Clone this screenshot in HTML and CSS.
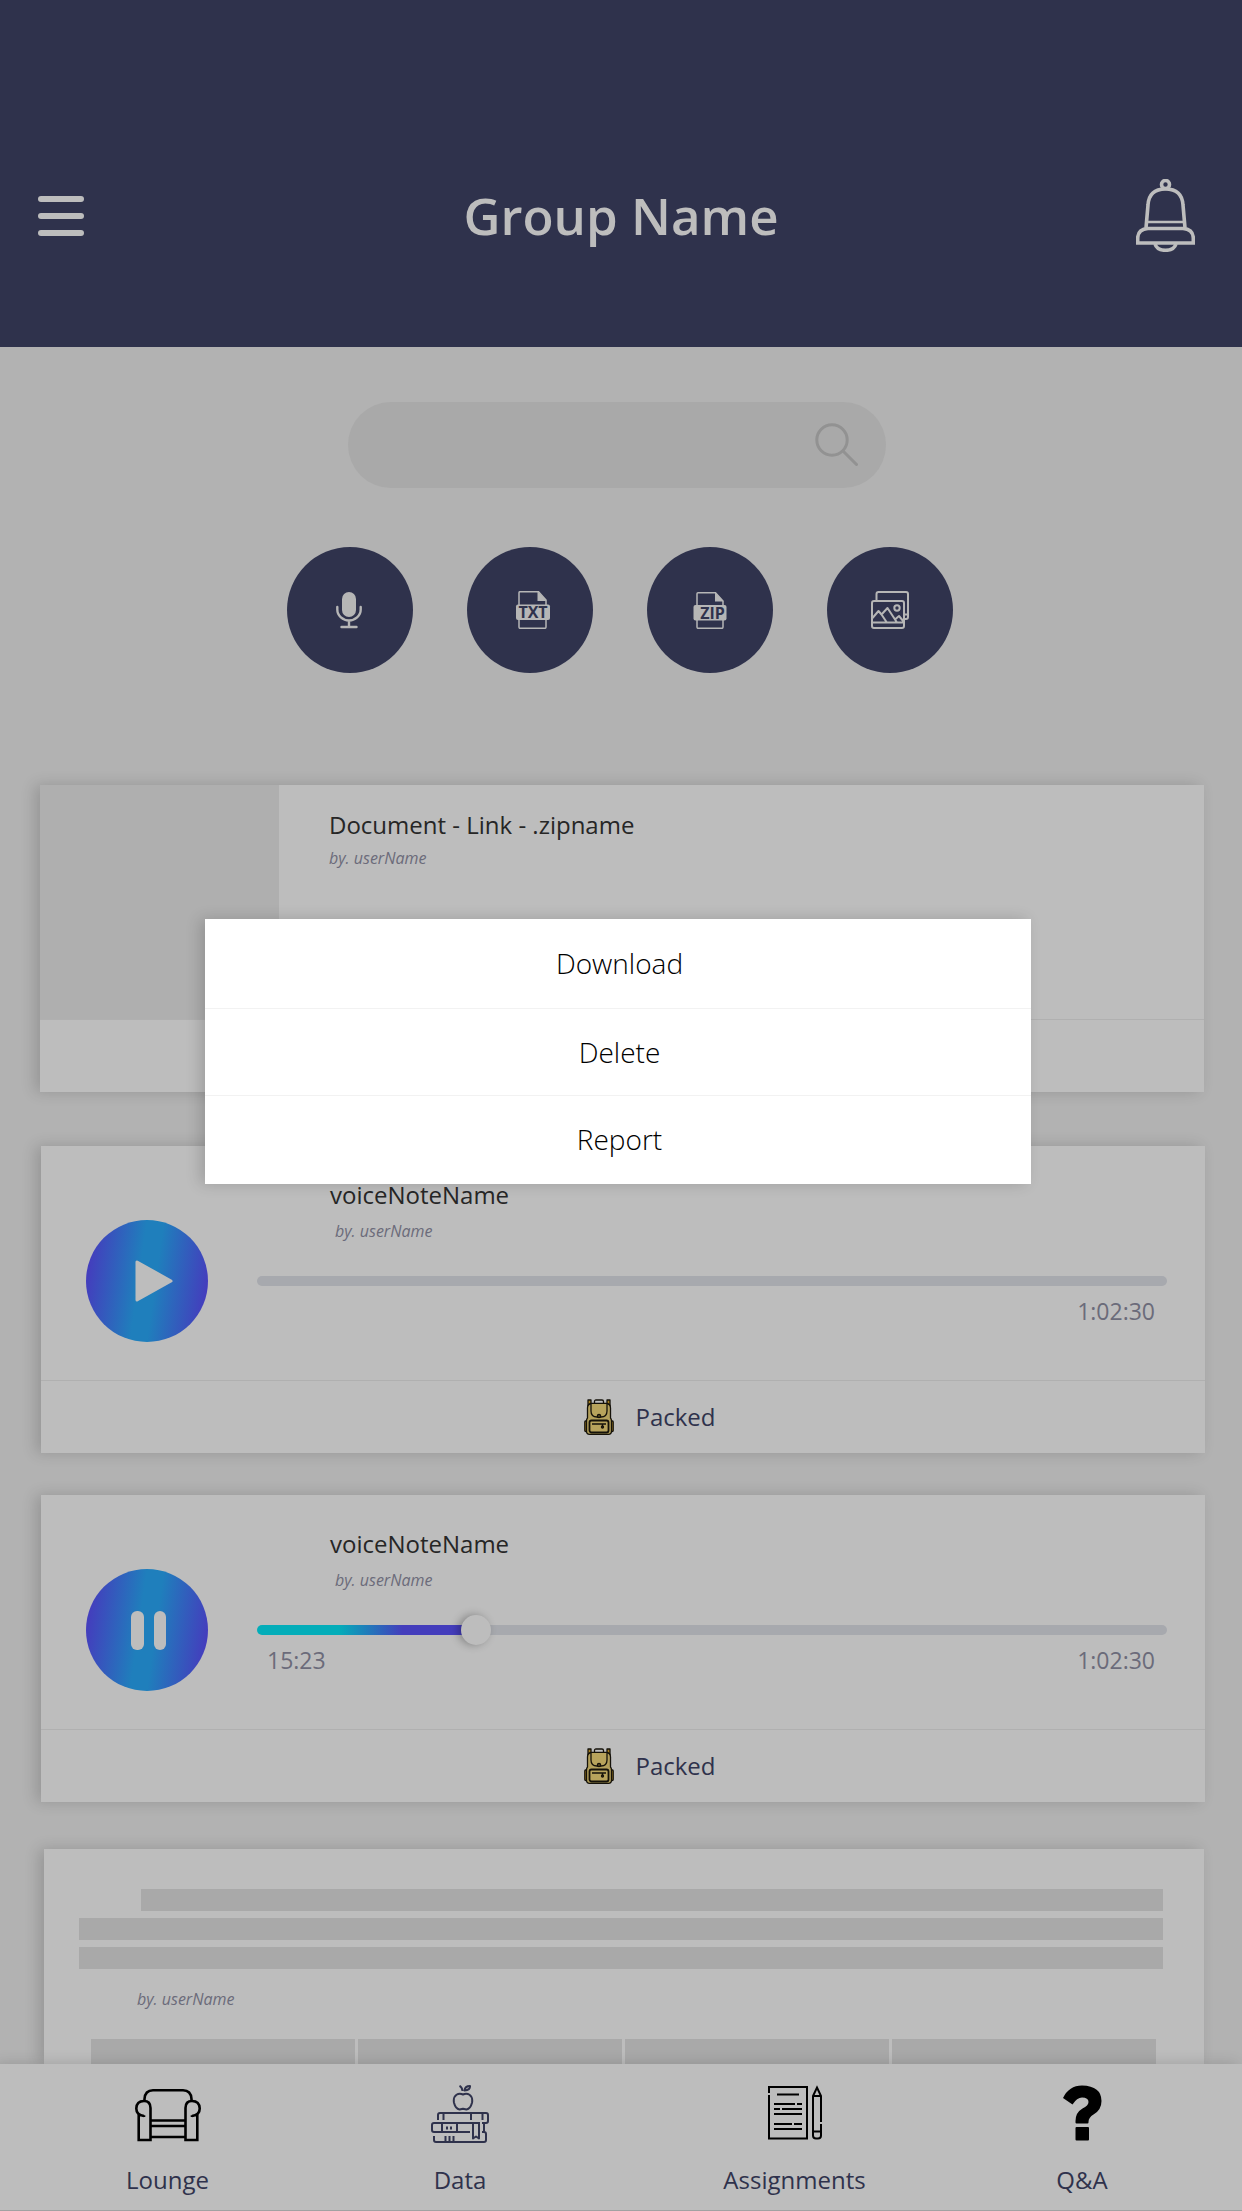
FILE: index.html
```html
<!DOCTYPE html>
<html lang="en">
<head>
  <meta charset="utf-8">
  <meta name="viewport" content="width=device-width, initial-scale=1">
  <title>Group Name</title>
  <link rel="stylesheet" href="styles.css">
</head>
<body>
  <svg class="sprite" aria-hidden="true">
    <symbol id="backpack" viewBox="0 0 30 36">
      <g stroke="#15120a" stroke-width="1.3" stroke-linejoin="round">
        <path d="M4 8V1h3v6M23 7V1h3v7" fill="#a67f1d"/>
        <path d="M10.500 4V2.500Q10.500 1 12 1h6q1.500 0 1.500 1.500V4" fill="none"/>
        <path d="M3 22H1.500Q.800 22 .800 23v8.500q0 1 1 1H4zM27 22h1.500q.700 0 .700 1v8.500q0 1-1 1H26z" fill="#a67f1d"/>
        <path d="M3.500 9Q3.500 4.500 8 4.500h14q4.500 0 4.500 4.500v10q1 1 1 3v10q0 3.300-3 3.300h-19q-3 0-3-3.300V22q0-2 1-3z" fill="#b3a05b"/>
        <path d="M7 5v7q0 6 6 6h4q6 0 6-6V5" fill="#b7a35c"/>
        <circle cx="15" cy="17" r="1.600" fill="#5c4c1c"/>
        <rect x="5.500" y="21.500" width="19" height="12" rx="2" fill="#b7a35c" stroke-width="1.800"/>
        <path d="M8 25h14M18.500 25v2" fill="none"/>
        <circle cx="18.500" cy="28" r="1" fill="#5c4c1c"/>
      </g>
    </symbol>
  </svg>

  <header class="topbar">
    <button class="icon-button" type="button" aria-label="Menu">
      <svg width="46" height="40" viewBox="0 0 46 40" fill="#bdbdbd"><rect width="46" height="6" rx="3"/><rect y="17" width="46" height="6" rx="3"/><rect y="34" width="46" height="6" rx="3"/></svg>
    </button>
    <h1 class="topbar-title">Group Name</h1>
    <button class="icon-button icon-end" type="button" aria-label="Notifications">
      <svg width="59" height="73" viewBox="0 0 59 73" fill="none" stroke="#bdbdbd" stroke-width="3.600">
        <circle cx="29.500" cy="5.500" r="4"/>
        <path d="M10 49L12 26Q13 10 29.500 10T47 26l2 23"/>
        <path d="M11 43h37" stroke-width="2.400"/>
        <path d="M12 49.500h35Q57 50 57.300 59v5H1.700v-5Q2 50 12 49.500z"/>
        <path d="M19 65q2 6.300 10.500 6.300T40 65"/>
      </svg>
    </button>
  </header>

  <section class="tools">
    <form class="search" role="search">
      <input class="search-input" type="search" aria-label="Search">
      <button class="icon-button" type="button" aria-label="Search">
        <svg width="43" height="43" viewBox="0 0 43 43" fill="none" stroke="#929292" stroke-width="3"><circle cx="17" cy="17" r="15.200"/><path d="M28 28l13.500 13.500" stroke-linecap="round"/></svg>
      </button>
    </form>
    <div class="filters">
      <button class="filter" type="button" aria-label="Voice notes">
        <svg width="38" height="38" viewBox="0 0 38 38" fill="none" stroke="#b6b6b6" stroke-width="2.400" stroke-linecap="round"><rect x="11" y="1" width="14" height="25" rx="7" fill="#b6b6b6" stroke="none"/><path d="M6.300 16v2.500C6.300 25 12 29.500 18 29.500S29.700 25 29.700 18.500V16M18 30v6M10.500 36h15"/></svg>
      </button>
      <button class="filter filter-file" type="button" aria-label="Text files">
        <svg width="38" height="38" viewBox="0 0 38 38"><path d="M5 14V1.800Q5 .700 6 .700h18.500L32 9v5M5 28v8q0 1.300 1 1.300h25q1 0 1-1.300v-8" fill="none" stroke="#b6b6b6" stroke-width="1.500"/><path d="M23.500 0v10H32.500z" fill="#b6b6b6"/><rect x="2" y="13.500" width="34" height="15.500" rx="2" fill="#b6b6b6"/><text class="file-tag" x="19" y="27" text-anchor="middle">TXT</text></svg>
      </button>
      <button class="filter" type="button" aria-label="Zip files">
        <svg width="38" height="38" viewBox="0 0 38 38"><path d="M6 14V2.800Q6 1.700 7 1.700h17.500L32 10v4M6 29v7q0 1.300 1 1.300h24q1 0 1-1.300v-7" fill="none" stroke="#b6b6b6" stroke-width="1.500"/><path d="M24 1v9.500H32.500z" fill="#b6b6b6"/><rect x="2.500" y="14" width="33" height="15.500" rx="2" fill="#b6b6b6"/><text class="file-tag" x="21.500" y="27.500" text-anchor="middle">ZIP</text></svg>
      </button>
      <button class="filter" type="button" aria-label="Photos">
        <svg width="38" height="38" viewBox="0 0 38 38" fill="none" stroke="#b6b6b6" stroke-width="2" stroke-linejoin="round"><path d="M5.500 9V3q0-2 2-2H35q2 0 2 2v23q0 2-2 2h-1.500M33.500 23.500H37"/><rect x="1" y="10" width="32" height="27" rx="2"/><path d="M1 31.500h32M1.500 27l6-7 3 3.500 6-6.500L26 31.500M10.500 23.500l5 7.500M24.500 28l3.500-3 5 6"/><circle cx="26" cy="17" r="2.700"/></svg>
      </button>
    </div>
  </section>

  <main class="feed">
    <article class="card">
      <div class="card-body">
        <div class="thumb"></div>
        <div class="file-info">
          <h2 class="name">Document - Link - .zipname</h2>
          <p class="author author-file">by. userName</p>
        </div>
      </div>
      <div class="card-foot"></div>
    </article>

    <article class="card card-spaced">
      <div class="card-body">
        <button class="play" type="button" aria-label="Play">
          <svg width="122" height="122" viewBox="0 0 122 122"><path d="M51 42v38l34-19z" fill="#bdbdbd" stroke="#bdbdbd" stroke-width="3" stroke-linejoin="round"/></svg>
        </button>
        <div class="player">
          <h2 class="name name-voice">voiceNoteName</h2>
          <p class="author author-voice">by. userName</p>
          <input class="seek" type="range" min="0" max="1000" value="0" aria-label="Position">
          <p class="times"><span></span><span>1:02:30</span></p>
        </div>
      </div>
      <div class="card-foot">
        <button class="packed" type="button"><svg width="30" height="36"><use href="#backpack"/></svg>Packed</button>
      </div>
    </article>

    <article class="card">
      <div class="card-body">
        <button class="play" type="button" aria-label="Pause">
          <svg width="122" height="122" viewBox="0 0 122 122" fill="#bdbdbd"><rect x="45" y="42" width="13" height="39" rx="6"/><rect x="68" y="42" width="12" height="39" rx="6"/></svg>
        </button>
        <div class="player">
          <h2 class="name name-voice">voiceNoteName</h2>
          <p class="author author-voice">by. userName</p>
          <input class="seek seek-active" type="range" min="0" max="1000" value="232" aria-label="Position">
          <p class="times"><span>15:23</span><span>1:02:30</span></p>
        </div>
      </div>
      <div class="card-foot">
        <button class="packed" type="button"><svg width="30" height="36"><use href="#backpack"/></svg>Packed</button>
      </div>
    </article>

    <article class="card card-post">
      <div class="lines">
        <div class="line line-first"></div>
        <div class="line"></div>
        <div class="line"></div>
      </div>
      <p class="author author-post">by. userName</p>
      <div class="tiles">
        <div class="tile"></div>
        <div class="tile"></div>
        <div class="tile"></div>
        <div class="tile"></div>
      </div>
    </article>
  </main>

  <nav class="tabs">
    <a class="tab" href="#lounge">
      <svg width="66" height="58" viewBox="0 0 66 58" fill="none" stroke="#000" stroke-width="2.600"><path d="M9.500 17V14Q10 5.200 18 5.200H48Q56 5.200 56.500 14v3"/><path d="M9 31Q1.300 30 1.300 23.500 1.500 16 9 16q6.500 0 6.500 7V55H3.700V30M57 31q7.700-1 7.700-7.500Q64.500 16 57 16q-6.500 0-6.500 7V55H62.300V30"/><path d="M15.500 35.500h35M15.500 41h35M15.500 52h35M9 30.200V32M57 30.200V32"/></svg>
      Lounge
    </a>
    <a class="tab" href="#data">
      <svg width="58" height="58" viewBox="0 0 58 58" fill="none" stroke="#2f324c" stroke-width="2" stroke-linejoin="round"><path d="M32 9.500q-3.500-1.800-6.500.3-3.500 2.500-2.500 8 1.500 6 5.500 6.700l3.500-.8 3.500.8q4-.7 5.500-6.700 1-5.500-2.500-8-3-2.100-6.500-.3zM31.500 6Q31 2 28.500.800M33.500 5.500Q34 1 39 1q.500 4-5.500 4.500z"/><path d="M7 35v-5q0-2 2-2h46q2 0 2 2v6q0 2-2 2h-4M12.500 29v6M40 29v6M51.500 29v6M49 38H3q-2 0-2 2v5q0 2 2 2h36M11 38v9M26 38v9M16 41.500v3M20 41.500v3M42 38v15.500l3-2 3 2V38M53 38v9M51 47h2q2 0 2 2v6q0 2-2 2H5q-2 0-2-2v-4M14.500 51v5M18.500 51v5M22.500 51v5"/></svg>
      Data
    </a>
    <a class="tab" href="#assignments">
      <svg width="54" height="58" viewBox="0 0 54 58" fill="none" stroke="#000" stroke-width="2"><path d="M1 8V2h38v51.500H1V10"/><path d="M9 9.500h22M6 19h21M29 19h5M6 24h6M14 24h20M6 29h28M6 39h18M26 39h8M6 44h28"/><path d="M53 37V11L49 2.500 45 11V50.500q0 3 3 3h2q3 0 3-3V39M45 11h8M45 46.500h8"/></svg>
      Assignments
    </a>
    <a class="tab" href="#qa">
      <svg width="40" height="58" viewBox="0 0 40 58"><path d="M1 13Q7 .500 20 .500 39.500 1 39.500 16q0 9-8 13.500-5 3-5 7.500v.5q0 1-1 1H14.500q-1 0-1-1V36q0-8.500 7-12.500 6-3 6-6.500 0-4.500-6.500-4.500-5 0-9.500 7Z"/><rect x="13.500" y="42" width="13.500" height="13.500" rx="1"/></svg>
      Q&amp;A
    </a>
  </nav>

  <div class="menu" role="menu">
    <button class="menu-item" type="button" role="menuitem">Download</button>
    <button class="menu-item" type="button" role="menuitem">Delete</button>
    <button class="menu-item" type="button" role="menuitem">Report</button>
  </div>
</body>
</html>
```
FILE: styles.css
```css
* {
  box-sizing: border-box;
}

body {
  position: relative;
  display: flex;
  flex-direction: column;
  min-height: 100vh;
  margin: 0;
  background: #b2b2b2;
  color: #262626;
  font-family: "Open Sans", "Noto Sans", sans-serif;
  font-size: 24px;
  line-height: 36px;
}

h1,
h2,
p {
  margin: 0;
  font-weight: 400;
}

button {
  padding: 0;
  border: 0;
  background: none;
  color: inherit;
  font: inherit;
  cursor: pointer;
}

svg {
  display: block;
}

.sprite {
  display: none;
}

/* Header */

.topbar {
  display: grid;
  grid-template-columns: 1fr auto 1fr;
  align-items: center;
  padding: 179px 38px 95px;
  background: #2f324c;
}

.topbar-title {
  color: #bdbdbd;
  font-size: 51px;
  font-weight: 600;
  line-height: 73px;
}

.icon-button {
  justify-self: start;
}

.icon-end {
  justify-self: end;
  margin-right: 9px;
}

/* Search and filters */

.tools {
  display: flex;
  flex-direction: column;
  align-items: center;
  gap: 59px;
  padding: 55px 8px 112px 0;
}

.search {
  display: flex;
  align-items: center;
  width: 538px;
  height: 86px;
  padding: 0 28px 2px 40px;
  border-radius: 43px;
  background: #a9a9a9;
}

.search-input {
  flex: 1;
  min-width: 0;
  border: 0;
  outline: 0;
  background: none;
  font: inherit;
}

.filters {
  display: flex;
  gap: 54px;
  padding-left: 6px;
}

.filter {
  display: flex;
  align-items: center;
  justify-content: center;
  width: 126px;
  height: 126px;
  border-radius: 50%;
  background: #2f324c;
}

.filter-file {
  padding-left: 6px;
}

.file-tag {
  fill: #2f324c;
  font-size: 16px;
  font-weight: 700;
}

/* Feed */

.feed {
  display: flex;
  flex: 1;
  flex-direction: column;
  padding: 0 37px 0 41px;
}

.card {
  margin-bottom: 42px;
  background: #bdbdbd;
  box-shadow: -5px 0 14px rgba(0, 0, 0, 0.16);
}

.card:first-child {
  margin: 0 1px 54px -1px;
}

.card-body {
  display: flex;
  height: 234px;
}

.card-foot {
  display: flex;
  align-items: center;
  justify-content: center;
  height: 73px;
  padding-left: 54px;
  border-top: 1px solid #b0b0b0;
}

.thumb {
  width: 239px;
  background: #afafaf;
}

.file-info {
  padding: 22px 50px;
}

.name {
  font-size: 24px;
  line-height: 36px;
}

.author {
  color: #6b6b7a;
  font-size: 16px;
  font-style: italic;
  line-height: 24px;
}

.author-file {
  margin-top: 3px;
}

.play {
  flex: none;
  align-self: flex-start;
  margin: 74px 49px 0 45px;
  border-radius: 50%;
  background: linear-gradient(98deg, #443dbd 6%, #1f7fbc 44%, #1f7fbc 56%, #443dbd 94%);
}

.player {
  flex: 1;
  padding: 31px 38px 0 0;
}

.name-voice {
  padding-left: 73px;
}

.author-voice {
  margin: 6px 0 23px;
  padding-left: 78px;
}

.times {
  display: flex;
  justify-content: space-between;
  padding: 0 12px 0 10px;
  color: #6b6b7a;
  font-size: 23px;
  line-height: 30px;
}

.seek {
  display: block;
  width: 100%;
  height: 30px;
  margin: 0;
  appearance: none;
  background: none;
}

.seek::-webkit-slider-runnable-track {
  height: 10px;
  border-radius: 5px;
  background: #a7a9ae;
}

.seek::-webkit-slider-thumb {
  width: 30px;
  height: 30px;
  margin-top: -10px;
  border-radius: 50%;
  appearance: none;
  background: none;
}

.seek-active::-webkit-slider-runnable-track {
  background: linear-gradient(90deg, #03adb9 9%, #443dbc 16%, #443dbc 24%, #a7a9ae 24%);
}

.seek-active::-webkit-slider-thumb {
  background: #bdbdbd;
  box-shadow: -3px 0 8px rgba(0, 0, 0, 0.3);
}

.packed {
  display: flex;
  align-items: center;
  gap: 21px;
  color: #2f324c;
  line-height: 38px;
}

.card-post {
  display: flex;
  flex: 1;
  flex-direction: column;
  margin: 5px 1px 0 3px;
  padding: 40px 41px 0 35px;
}

.lines {
  display: grid;
  gap: 7px;
}

.line {
  height: 22px;
  background: #a9a9a9;
}

.line-first {
  margin-left: 62px;
}

.author-post {
  margin: 18px 0 28px;
  padding-left: 58px;
}

.tiles {
  display: grid;
  flex: 1;
  grid-template-columns: repeat(4, 1fr);
  gap: 3px;
  min-height: 25px;
  padding: 0 7px 0 12px;
}

.tile {
  background: #a9a9a9;
}

/* Bottom tabs */

.tabs {
  position: relative;
  display: grid;
  grid-template-columns: 335fr 250fr 419fr 156fr;
  padding: 21px 82px 9px 0;
  border-bottom: 1px solid #a2a2a2;
  background: #bdbdbd;
  box-shadow: -5px 0 14px rgba(0, 0, 0, 0.16);
}

.tab {
  display: flex;
  flex-direction: column;
  align-items: center;
  gap: 16px;
  color: #2f324c;
  line-height: 42px;
  text-decoration: none;
}

/* Action menu, drawn over the feed */

.menu {
  position: absolute;
  top: 919px;
  right: 211px;
  left: 205px;
  background: #fff;
  box-shadow: -5px 0 14px rgba(0, 0, 0, 0.16);
}

.menu-item {
  display: block;
  width: 100%;
  height: 89px;
  padding: 0 0 1px 3px;
  color: #000;
  font-size: 28px;
  font-weight: 300;
}

.menu-item + .menu-item {
  height: 87px;
  border-top: 1px solid #f2f2f2;
}

.menu-item:last-child {
  margin-bottom: 2px;
}
```
